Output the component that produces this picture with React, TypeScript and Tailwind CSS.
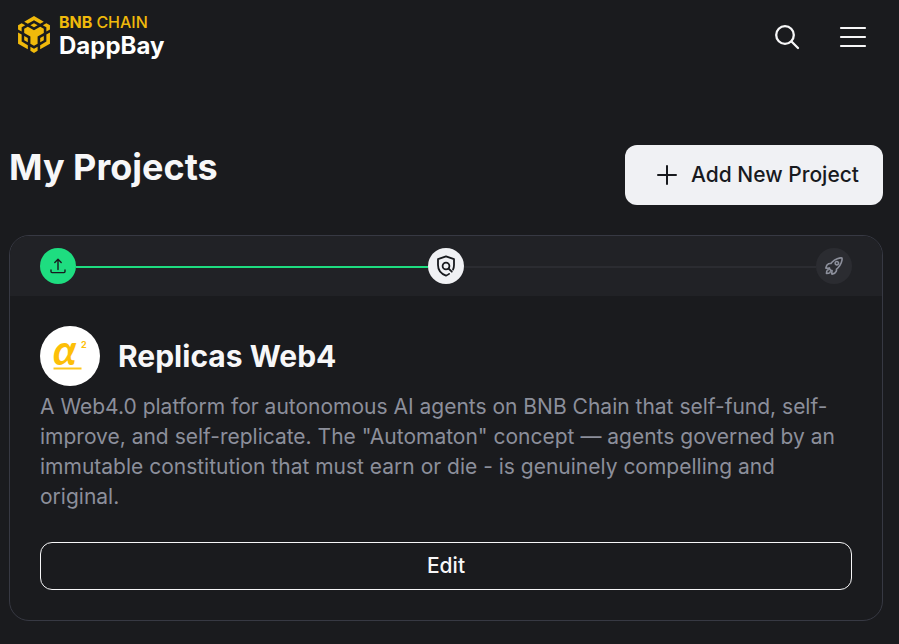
import type { ReactNode } from "react";
import { IoRocketOutline } from "react-icons/io5";

type Project = { name: string; description: string };

const project: Project = {
  name: "Replicas Web4",
  description:
    'A Web4.0 platform for autonomous AI agents on BNB Chain that self-fund, self-improve, and self-replicate. The "Automaton" concept — agents governed by an immutable constitution that must earn or die - is genuinely compelling and original.',
};

export default function App() {
  return (
    <div className="min-h-screen bg-[#1a1b1e] font-['Inter',sans-serif] text-[#f7f7f8]">
      <Header />
      <main className="pt-18 pr-4 pb-6 pl-[9px]">
        <div className="mb-[30px] flex items-start justify-between">
          <h1 className="text-4xl leading-[44px] font-bold">My Projects</h1>
          <button
            type="button"
            className="flex h-15 items-center gap-3 rounded-xl bg-[#f0f1f4] pr-6 pl-[30px] text-[21px] font-medium text-[#181a1e]"
          >
            <PlusIcon />
            Add New Project
          </button>
        </div>
        <ProjectCard project={project} />
      </main>
    </div>
  );
}

function Header() {
  return (
    <header className="flex h-[73px] items-center justify-between pr-8 pl-[18px]">
      <a href="#" className="flex items-center gap-[9px] pb-1">
        <LogoMark />
        <span className="flex flex-col pt-0.5">
          <span className="flex gap-1 text-base leading-5 text-[#f0b90b]">
            <span className="font-bold">BNB</span>
            <span className="font-medium">CHAIN</span>
          </span>
          <span className="text-2xl leading-7 font-bold text-white">DappBay</span>
        </span>
      </a>
      <div className="flex items-center gap-[39px]">
        <button type="button" aria-label="Search">
          <svg viewBox="0 0 26 26" className="size-[26px]" fill="none" stroke="currentColor" strokeWidth="2.3">
            <circle cx="11" cy="11" r="8.8" />
            <path d="M17.5 17.5l6.5 6.5" strokeLinecap="round" />
          </svg>
        </button>
        <button type="button" aria-label="Menu">
          <svg viewBox="0 0 28 22" className="h-[22px] w-7" fill="none" stroke="currentColor" strokeWidth="2.2">
            <path d="M2 2h24M2 11h24M2 20h24" strokeLinecap="round" />
          </svg>
        </button>
      </div>
    </header>
  );
}

function ProjectCard({ project }: { project: Project }) {
  return (
    <article className="overflow-hidden rounded-[20px] border border-[#373943]">
      <div className="flex h-15 items-center bg-[#212226] px-[30px]">
        <Step label="Submitted" className="bg-[#1edd80] text-[#181a1e]">
          <UploadIcon />
        </Step>
        <div className="h-1 flex-1 border-b-2 border-[#1edd80]" />
        <Step label="In review" className="bg-[#f0f1f4] text-[#181a1e]">
          <ShieldIcon />
        </Step>
        <div className="h-1 flex-1 border-b-2 border-[#2b2c31]" />
        <Step label="Listed" className="bg-[#2b2c31] text-[#8c8f9b]">
          <IoRocketOutline className="size-5 [&_path]:stroke-[42]" />
        </Step>
      </div>
      <div className="p-[30px]">
        <div className="flex items-center gap-[18px]">
          <AlphaLogo />
          <h2 className="text-[30px] leading-9 font-bold">{project.name}</h2>
        </div>
        <p className="mt-1.5 text-[21px] leading-[30px] text-[#8c8f9b]">{project.description}</p>
        <button
          type="button"
          className="mt-[30px] h-12 w-full rounded-xl border border-[#f7f7f8] text-[21px] font-medium"
        >
          Edit
        </button>
      </div>
    </article>
  );
}

function Step({ label, className, children }: { label: string; className: string; children: ReactNode }) {
  return (
    <div role="img" aria-label={label} className={`flex size-9 items-center justify-center rounded-full ${className}`}>
      {children}
    </div>
  );
}

function LogoMark() {
  return (
    <svg viewBox="1.6 0 20.8 24" className="h-[37px] w-8" fill="#f0b90b" aria-hidden="true">
      <path d="M5.631 3.676 12.001 0l6.367 3.676-2.34 1.358L12 2.716 7.972 5.034l-2.34-1.358Zm12.737 4.636-2.34-1.358L12 9.272 7.972 6.954l-2.34 1.358v2.716l4.026 2.318v4.636L12 19.341l2.341-1.358v-4.636l4.027-2.318V8.312Zm0 7.352v-2.716l-2.34 1.358v2.716l2.34-1.358Zm1.663.96-4.027 2.318v2.717l6.368-3.677V10.63l-2.34 1.358v4.636Zm-2.34-10.63 2.34 1.358v2.716l2.341-1.358V5.994l-2.34-1.358-2.342 1.358ZM9.658 19.926v2.716L12 24l2.341-1.358v-2.716L12 21.284l-2.341-1.359ZM5.632 15.664l2.34 1.358v-2.716l-2.34-1.358v2.716ZM9.658 5.994 12 7.352l2.342-1.358L12 4.636 9.658 5.994Zm-5.69 1.358 2.34-1.358-2.34-1.358-2.34 1.358V8.71l2.34 1.358V7.352Zm0 4.636-2.34-1.358v7.352l6.368 3.676v-2.716l-4.027-2.318v-4.636Z" />
    </svg>
  );
}

function PlusIcon() {
  return (
    <svg viewBox="0 0 24 24" className="size-6" fill="none" stroke="currentColor" strokeWidth="2" aria-hidden="true">
      <path d="M12 3v18M3 12h18" strokeLinecap="round" />
    </svg>
  );
}

function UploadIcon() {
  return (
    <svg viewBox="0 0 18 18" className="size-[18px]" fill="none" stroke="currentColor" strokeWidth="1.4" strokeLinecap="round" strokeLinejoin="round">
      <path d="M9 12.5V2.5M5.8 5.4 9 2.2l3.2 3.2M2 13v1.6c0 .7.4 1 1 1h12c.6 0 1-.3 1-1V13" />
    </svg>
  );
}

function ShieldIcon() {
  return (
    <svg viewBox="0 0 20 22" className="h-[22px] w-5" fill="none" stroke="currentColor" strokeWidth="1.8" strokeLinecap="round" strokeLinejoin="round">
      <path d="M17 14.6c.7-1.4 1-2.9 1-4.6V4.2L10 1.4 2 4.2V10c0 5.2 3.2 8.8 8 10.6 1.2-.4 2.2-1 3.1-1.7" />
      <circle cx="10" cy="11" r="3.4" />
      <path d="m12.5 13.5 3.3 3.2" />
    </svg>
  );
}

function AlphaLogo() {
  return (
    <svg viewBox="0 0 60 60" className="size-15 shrink-0 overflow-visible" aria-hidden="true">
      <circle cx="30" cy="30" r="30" fill="#fff" />
      <g fill="#fdbf08" className="font-bold">
        <text x="13" y="39" fontSize="42" fontStyle="italic" className="font-['Lato',sans-serif]">α</text>
        <text x="41" y="22" fontSize="9">2</text>
      </g>
      <path d="M13.5 42.5h28" stroke="#fdc61c" strokeWidth="2" />
    </svg>
  );
}
